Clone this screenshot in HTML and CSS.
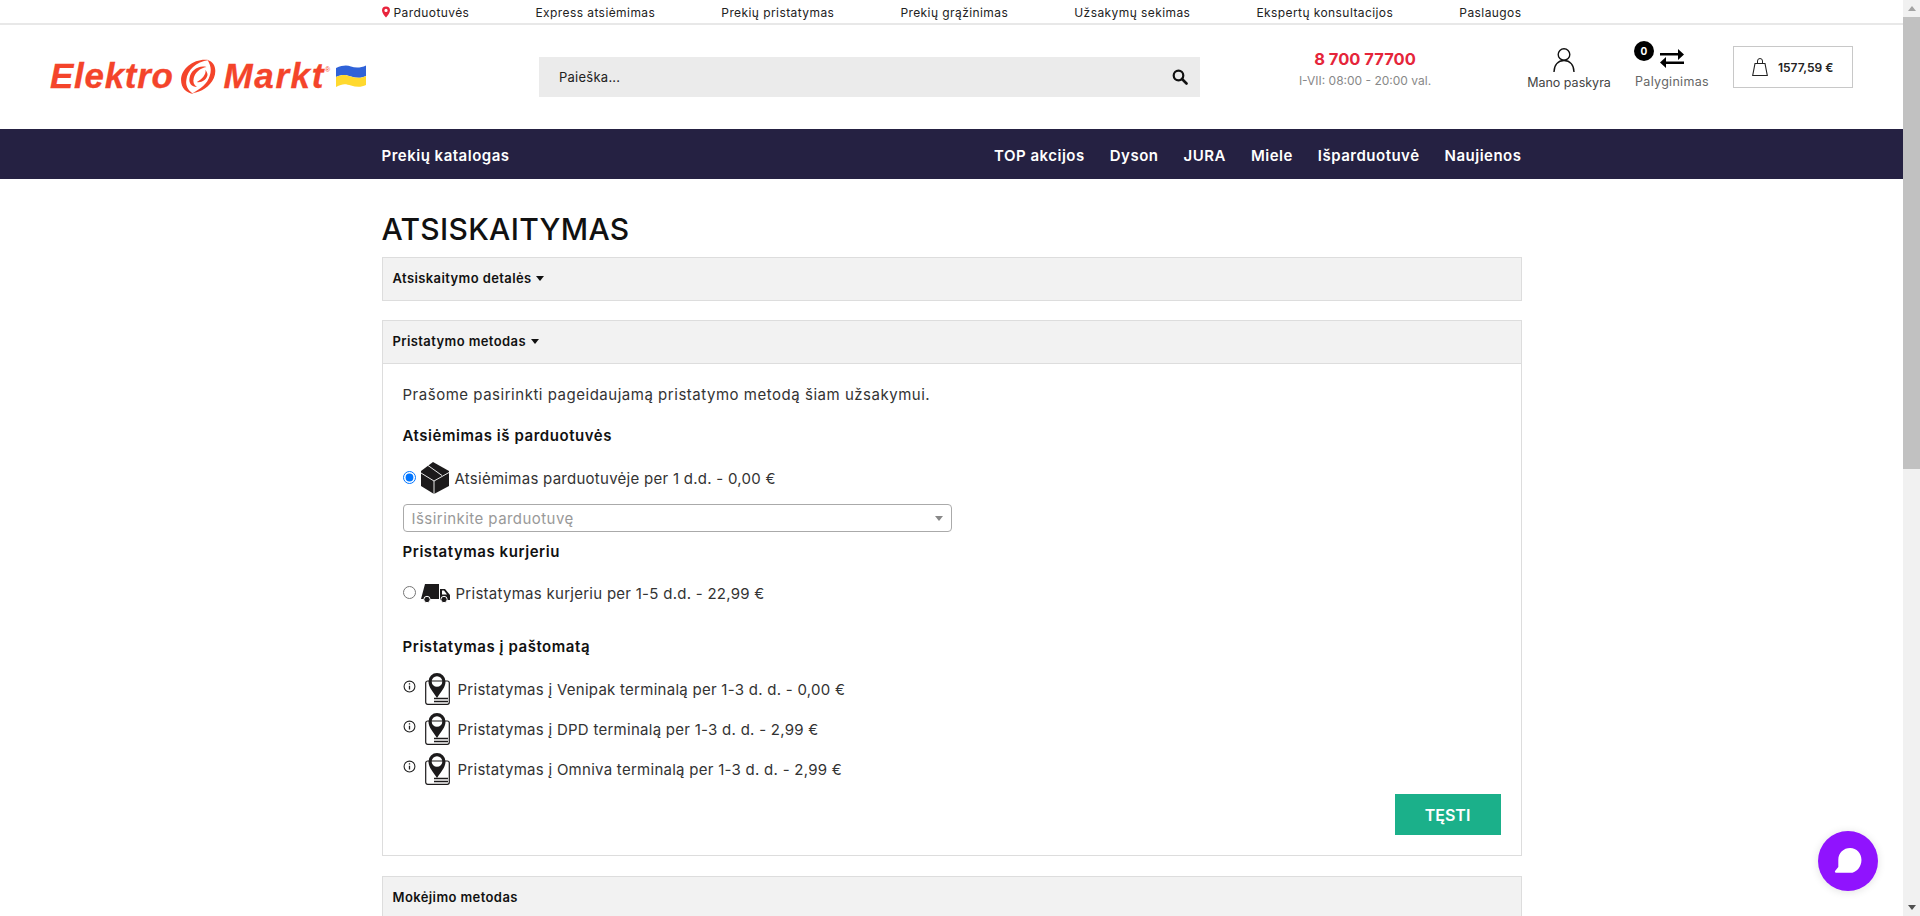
FILE: index.html
```html
<!DOCTYPE html>
<html lang="lt">
<head>
    <meta charset="UTF-8">
    <meta name="viewport" content="width=device-width, initial-scale=1.0">
    <title>Atsiskaitymas - Elektromarkt</title>
    <link rel="stylesheet" href="styles.css">
</head>
<body>
    <div class="page">
        <div class="site">
            <div class="topbar">
                <div class="container topbar-links">
                    <a class="stores">
                        <svg class="pin-icon" viewBox="0 0 10 14"><path fill-rule="evenodd" fill="#e8243c" d="M5 0a5 5 0 0 1 5 5c0 3-3 6.500-5 9-2-2.500-5-6-5-9a5 5 0 0 1 5-5zm0 3a2 2 0 1 0 0 4 2 2 0 0 0 0-4z"/></svg>
                        Parduotuvės
                    </a>
                    <a>Express atsiėmimas</a>
                    <a>Prekių pristatymas</a>
                    <a>Prekių grąžinimas</a>
                    <a>Užsakymų sekimas</a>
                    <a>Ekspertų konsultacijos</a>
                    <a>Paslaugos</a>
                </div>
            </div>

            <header class="header">
                <div class="logo">
                    <span class="logo-word">Elektro</span>
                    <svg class="logo-swirl" viewBox="0 0 34 35" preserveAspectRatio="none">
                        <path fill="#f4442a" d="M27 1C14-1 1 9 1 21c0 8 5 13 12 14-5-3-8-8-7-14C7 11 15 3 27 1z"/>
                        <path fill="#f4442a" d="M26 1c7 2 9 10 6 18-4 9-12 14-20 15 7-4 14-9 16-17 2-6 1-11-2-16z"/>
                        <path fill="#f4442a" d="M25 8c-8-2-15 4-16 11-1 5 2 9 7 9-3-2-4-5-3-9 1-5 6-10 12-11z"/>
                        <path fill="#f4442a" d="M16 23c4 1 9-2 10-7 0-2-1-4-2-5 1 4-3 9-8 12z"/>
                    </svg>
                    <span class="logo-word logo-word-wide">Markt</span>
                    <span class="logo-reg">®</span>
                    <svg class="logo-flag" viewBox="0 0 30 23">
                        <path fill="#2f62d8" d="M0 3c7-3 11-3 15-1.500S25 3 30 .5V11c-5 2.500-10 2-15 .5S7 9 0 12z"/>
                        <path fill="#ffd92e" d="M0 12c7-3 10-2 15-.5s10 2 15-.5v9c-5 2.500-10 2-15 .5S7 18 0 22z"/>
                    </svg>
                </div>

                <div class="search">
                    <span>Paieška...</span>
                    <svg class="search-icon" viewBox="0 0 16 16"><circle cx="6.500" cy="6.500" r="4.800" fill="none" stroke="#111" stroke-width="2.200"/><path d="M10 10l4.500 4.500" stroke="#111" stroke-width="2.600" stroke-linecap="round"/></svg>
                </div>

                <div class="contact">
                    <div class="phone">8 700 77700</div>
                    <div class="hours">I-VII: 08:00 - 20:00 val.</div>
                </div>

                <a class="account">
                    <svg class="account-icon" viewBox="0 0 22 24"><circle cx="11" cy="6.500" r="5.800" fill="none" stroke="#111" stroke-width="1.400"/><path d="M1 24c0-7 4-11.500 10-11.500S21 17 21 24" fill="none" stroke="#111" stroke-width="1.400"/></svg>
                    <span>Mano paskyra</span>
                </a>

                <a class="compare">
                    <span class="compare-badge">0</span>
                    <svg class="compare-icon" viewBox="0 0 24 19"><path fill="#000" d="M0 4h18V0l6 5.500-6 5.500V6.500H0zM24 12.500H6V8l-6 5.500L6 19v-4h18z"/></svg>
                    <span class="compare-label">Palyginimas</span>
                </a>

                <a class="cart">
                    <svg class="cart-icon" viewBox="0 0 16 18"><path d="M3 5.500h10l2.300 12H.7z" fill="none" stroke="#222" stroke-width="1.100"/><path d="M5.500 5.500V3a2.500 2.500 0 0 1 5 0v2.500" fill="none" stroke="#222" stroke-width="1"/></svg>
                    <span>1577,59 €</span>
                </a>
            </header>

            <nav class="nav">
                <div class="container nav-row">
                    <a>Prekių katalogas</a>
                    <div class="nav-links">
                        <a>TOP akcijos</a>
                        <a>Dyson</a>
                        <a>JURA</a>
                        <a>Miele</a>
                        <a>Išparduotuvė</a>
                        <a>Naujienos</a>
                    </div>
                </div>
            </nav>

            <main class="container checkout">
                <h1>ATSISKAITYMAS</h1>

                <section class="panel panel-closed">
                    <div class="panel-head">Atsiskaitymo detalės <span class="caret"></span></div>
                </section>

                <section class="panel">
                    <div class="panel-head">Pristatymo metodas <span class="caret"></span></div>
                    <div class="panel-body">
                        <p class="intro">Prašome pasirinkti pageidaujamą pristatymo metodą šiam užsakymui.</p>

                        <h2 class="group-title">Atsiėmimas iš parduotuvės</h2>
                        <label class="option option-first">
                            <input class="radio" type="radio" name="shipping" checked>
                            <svg class="box-icon" viewBox="0 0 28 32"><path fill="#1c1a1b" d="M12 0l16 9v15l-15 8-13-8V9z"/><path fill="none" stroke="#fff" stroke-width=".9" d="M0 11l13 8 15-8.500M13 19v13M7 3.500L21 13.500"/></svg>
                            Atsiėmimas parduotuvėje per 1 d.d. - 0,00 €
                        </label>
                        <div class="select">
                            <span>Išsirinkite parduotuvę</span>
                            <span class="select-arrow"></span>
                        </div>

                        <h2 class="group-title group-courier">Pristatymas kurjeriu</h2>
                        <label class="option option-courier">
                            <input class="radio" type="radio" name="shipping">
                            <svg class="truck-icon" viewBox="0 0 29 19"><path fill="#1c1a1b" d="M4 0h14v15H0zM19 5h5l5 6v5h-10z"/><path fill="#fff" d="M21 6.500h2l3 4h-5z"/><circle cx="6" cy="15.500" r="3.200" fill="#1c1a1b" stroke="#fff"/><circle cx="23" cy="15.500" r="3.200" fill="#1c1a1b" stroke="#fff"/></svg>
                            Pristatymas kurjeriu per 1-5 d.d. - 22,99 €
                        </label>

                        <h2 class="group-title group-locker">Pristatymas į paštomatą</h2>
                        <div class="option locker">
                            <svg class="info-icon" viewBox="0 0 12 12"><circle cx="6" cy="6" r="5" fill="none" stroke="#222" stroke-width="1"/><path d="M6 5.200v3.600M6 3v1.200" stroke="#222" stroke-width="1.200"/></svg>
                            <svg class="parcel-icon" viewBox="0 0 25 32"><rect x=".7" y="8" width="23.600" height="23.300" rx="2" fill="#fff" stroke="#1c1a1b" stroke-width="1.200"/><path fill="#1c1a1b" fill-rule="evenodd" d="M12 0a8.500 8.500 0 0 1 8.500 8.500c0 6-4.500 10-8.500 16.500C8 18.500 3.500 14.500 3.500 8.500A8.500 8.500 0 0 1 12 0zm0 3.200a5.300 5.300 0 1 0 0 10.600 5.300 5.300 0 0 0 0-10.600z"/><path stroke="#1c1a1b" stroke-width="1.500" d="M9 25.500h14M9 28.500h14"/></svg>
                            Pristatymas į Venipak terminalą per 1-3 d. d. - 0,00 €
                        </div>
                        <div class="option locker">
                            <svg class="info-icon" viewBox="0 0 12 12"><circle cx="6" cy="6" r="5" fill="none" stroke="#222" stroke-width="1"/><path d="M6 5.200v3.600M6 3v1.200" stroke="#222" stroke-width="1.200"/></svg>
                            <svg class="parcel-icon" viewBox="0 0 25 32"><rect x=".7" y="8" width="23.600" height="23.300" rx="2" fill="#fff" stroke="#1c1a1b" stroke-width="1.200"/><path fill="#1c1a1b" fill-rule="evenodd" d="M12 0a8.500 8.500 0 0 1 8.500 8.500c0 6-4.500 10-8.500 16.500C8 18.500 3.500 14.500 3.500 8.500A8.500 8.500 0 0 1 12 0zm0 3.200a5.300 5.300 0 1 0 0 10.600 5.300 5.300 0 0 0 0-10.600z"/><path stroke="#1c1a1b" stroke-width="1.500" d="M9 25.500h14M9 28.500h14"/></svg>
                            Pristatymas į DPD terminalą per 1-3 d. d. - 2,99 €
                        </div>
                        <div class="option locker">
                            <svg class="info-icon" viewBox="0 0 12 12"><circle cx="6" cy="6" r="5" fill="none" stroke="#222" stroke-width="1"/><path d="M6 5.200v3.600M6 3v1.200" stroke="#222" stroke-width="1.200"/></svg>
                            <svg class="parcel-icon" viewBox="0 0 25 32"><rect x=".7" y="8" width="23.600" height="23.300" rx="2" fill="#fff" stroke="#1c1a1b" stroke-width="1.200"/><path fill="#1c1a1b" fill-rule="evenodd" d="M12 0a8.500 8.500 0 0 1 8.500 8.500c0 6-4.500 10-8.500 16.500C8 18.500 3.500 14.500 3.500 8.500A8.500 8.500 0 0 1 12 0zm0 3.200a5.300 5.300 0 1 0 0 10.600 5.300 5.300 0 0 0 0-10.600z"/><path stroke="#1c1a1b" stroke-width="1.500" d="M9 25.500h14M9 28.500h14"/></svg>
                            Pristatymas į Omniva terminalą per 1-3 d. d. - 2,99 €
                        </div>

                        <div class="actions">
                            <button class="btn-next">TĘSTI</button>
                        </div>
                    </div>
                </section>

                <section class="panel">
                    <div class="panel-head">Mokėjimo metodas</div>
                </section>
            </main>
        </div>

        <aside class="scrollbar">
            <span class="scroll-up"></span>
            <span class="scroll-thumb"></span>
            <span class="scroll-down"></span>
        </aside>
    </div>

    <button class="chat">
        <svg viewBox="0 0 26 26"><path fill="#fff" d="M15 1c6 0 10.500 5 10.500 11S21 24 15 24H2c-1 0-1.500-.8-1-1.600L4 18.500V12C4 5.500 9 1 15 1z"/></svg>
    </button>
</body>
</html>
```

FILE: styles.css
```css
* {
    box-sizing: border-box;
}
html, body {
    margin: 0;
    height: 916px;
    overflow: hidden;
}
body {
    font-family: Inter, "Open Sans", sans-serif;
    color: #222;
    background-color: #fff;
}
a {
    color: inherit;
}
.page {
    display: flex;
    height: 916px;
}
.site {
    flex: 1;
    min-width: 0;
    overflow: hidden;
}
.container {
    width: 1140px;
    margin: 0 auto;
}

/* top links */
.topbar {
    height: 25px;
    border-bottom: 2px solid #e8e8e8;
}
.topbar-links {
    display: flex;
    justify-content: space-between;
    align-items: center;
    height: 24px;
    font-size: 12px;
    letter-spacing: .42px;
}
.stores {
    display: flex;
    align-items: center;
    gap: 4px;
}
.pin-icon {
    width: 8px;
    height: 12px;
}

/* header */
.header {
    display: flex;
    height: 104px;
}
.logo {
    display: flex;
    align-items: center;
    width: 489px;
    height: 38px;
    margin: 32px 0 0 50px;
}
.logo-word {
    font-family: "Liberation Sans", sans-serif;
    font-size: 35px;
    font-weight: 700;
    font-style: italic;
    letter-spacing: .7px;
    color: #f4442a;
    -webkit-text-stroke: .3px #f4442a;
}
.logo-word-wide {
    letter-spacing: 1.6px;
}
.logo-swirl {
    width: 36px;
    height: 35px;
    margin: 0 8px 0 6px;
    flex-shrink: 0;
}
.logo-reg {
    font-family: "Liberation Sans", sans-serif;
    font-size: 7px;
    color: #f4442a;
    margin: -14px 6px 0 0;
}
.logo-flag {
    width: 30px;
    height: 23px;
}
.search {
    display: flex;
    justify-content: space-between;
    align-items: center;
    width: 661px;
    height: 40px;
    margin-top: 32px;
    padding: 0 12px 0 20px;
    background-color: #ebebeb;
    font-size: 13px;
    letter-spacing: .25px;
}
.search-icon {
    width: 16px;
    height: 16px;
}
.contact {
    width: 330px;
    margin-top: 22px;
    text-align: center;
}
.phone {
    font-size: 16.500px;
    font-weight: 700;
    line-height: 24px;
    color: #e5253a;
}
.hours {
    font-size: 12px;
    line-height: 20px;
    color: #888;
}
.account {
    display: flex;
    flex-direction: column;
    align-items: center;
    width: 78px;
    margin-top: 23px;
    flex-shrink: 0;
    font-size: 12.500px;
    white-space: nowrap;
    color: #444;
}
.account-icon {
    width: 22px;
    height: 24px;
    margin: 0 10px 3px 0;
}
.compare {
    position: relative;
    display: flex;
    flex-direction: column;
    align-items: center;
    width: 80px;
    margin: 21px 0 0 24px;
    flex-shrink: 0;
    font-size: 12.500px;
    letter-spacing: .3px;
    color: #666;
}
.compare-icon {
    width: 24px;
    height: 19px;
    margin: 3px 0 6px;
}
.compare-badge {
    position: absolute;
    left: 2px;
    top: -5px;
    width: 20px;
    height: 20px;
    border-radius: 50%;
    background-color: #000;
    color: #fff;
    font-size: 10px;
    font-weight: 700;
    line-height: 20px;
    text-align: center;
}
.cart {
    display: flex;
    align-items: center;
    gap: 10px;
    width: 120px;
    height: 42px;
    margin: 21px 0 0 21px;
    padding-left: 18px;
    flex-shrink: 0;
    border: 1px solid #c8c8c8;
    font-size: 12px;
    font-weight: 600;
}
.cart-icon {
    width: 16px;
    height: 18px;
}

/* dark menu */
.nav {
    height: 50px;
    background-color: #252142;
    color: #fff;
}
.nav-row {
    display: flex;
    justify-content: space-between;
    align-items: center;
    height: 52px;
    font-size: 15px;
    font-weight: 600;
    letter-spacing: .5px;
}
.nav-links {
    display: flex;
    gap: 25px;
}

/* checkout */
.checkout h1 {
    margin: 32px 0 10px;
    font-size: 30px;
    font-weight: 500;
    line-height: 36px;
    letter-spacing: .3px;
    color: #111;
}
.panel {
    margin-bottom: 20px;
    border: 1px solid #ddd;
}
.panel-closed {
    margin-bottom: 19px;
}
.panel-head {
    height: 42px;
    padding: 0 10px;
    background-color: #f2f2f2;
    font-size: 13px;
    font-weight: 600;
    line-height: 41px;
    letter-spacing: .4px;
    color: #111;
}
.caret {
    display: inline-block;
    margin-left: 1px;
    vertical-align: 2px;
    border-top: 5px solid #111;
    border-left: 4px solid transparent;
    border-right: 4px solid transparent;
}
.panel-body {
    height: 492px;
    padding: 19px 20px 20px;
    border-top: 1px solid #ddd;
    font-size: 15px;
    letter-spacing: .27px;
    color: #333;
}
.intro {
    margin: 1px 0 0;
    line-height: 22px;
    letter-spacing: .52px;
}
.group-title {
    margin: 20px 0 0;
    font-size: 15px;
    font-weight: 600;
    line-height: 20px;
    letter-spacing: .55px;
    color: #111;
}
.option {
    display: flex;
    align-items: center;
}
.option-first {
    height: 32px;
    margin-top: 16px;
}
.radio {
    width: 13px;
    height: 13px;
    margin: -2px 5px 0 0;
}
.box-icon {
    width: 28px;
    height: 32px;
    margin-right: 6px;
}
.select {
    display: flex;
    justify-content: space-between;
    align-items: center;
    width: 549px;
    height: 28px;
    margin-top: 10px;
    padding: 0 8px;
    border: 1px solid #aaa;
    border-radius: 4px;
    font-size: 15px;
    letter-spacing: .45px;
    color: #999;
}
.select-arrow {
    border-top: 5px solid #888;
    border-left: 4px solid transparent;
    border-right: 4px solid transparent;
}
.group-courier {
    margin-top: 10px;
}
.option-courier {
    height: 24px;
    margin-top: 19px;
}
.truck-icon {
    width: 29px;
    height: 19px;
    margin-right: 6px;
}
.group-locker {
    margin-top: 32px;
}
.locker {
    height: 32px;
    margin-top: 8px;
}
.group-locker + .locker {
    margin-top: 16px;
}
.info-icon {
    width: 13px;
    height: 13px;
    margin: -5px 9px 0 0;
}
.parcel-icon {
    width: 25px;
    height: 32px;
    margin-right: 8px;
}
.actions {
    display: flex;
    justify-content: flex-end;
    margin-top: 9px;
}
.btn-next {
    width: 106px;
    height: 41px;
    border: none;
    background-color: #1bb08a;
    color: #fff;
    font-family: inherit;
    font-size: 16px;
    font-weight: 600;
}

/* fake browser scrollbar */
.scrollbar {
    display: flex;
    flex-direction: column;
    align-items: center;
    width: 17px;
    background-color: #f1f1f1;
}
.scroll-up {
    margin: 6px 0;
    border-bottom: 5px solid #a3a3a3;
    border-left: 4px solid transparent;
    border-right: 4px solid transparent;
}
.scroll-thumb {
    width: 100%;
    height: 452px;
    background-color: #c1c1c1;
}
.scroll-down {
    margin-top: auto;
    margin-bottom: 6px;
    border-top: 5px solid #505050;
    border-left: 4px solid transparent;
    border-right: 4px solid transparent;
}

/* chat bubble */
.chat {
    position: fixed;
    left: 1818px;
    top: 831px;
    display: flex;
    align-items: center;
    justify-content: center;
    width: 60px;
    height: 60px;
    padding: 0;
    border: none;
    border-radius: 50%;
    background-color: #9013fe;
    box-shadow: 0 1px 8px rgba(0, 0, 0, .12);
}
.chat svg {
    width: 28px;
    height: 28px;
}
```
